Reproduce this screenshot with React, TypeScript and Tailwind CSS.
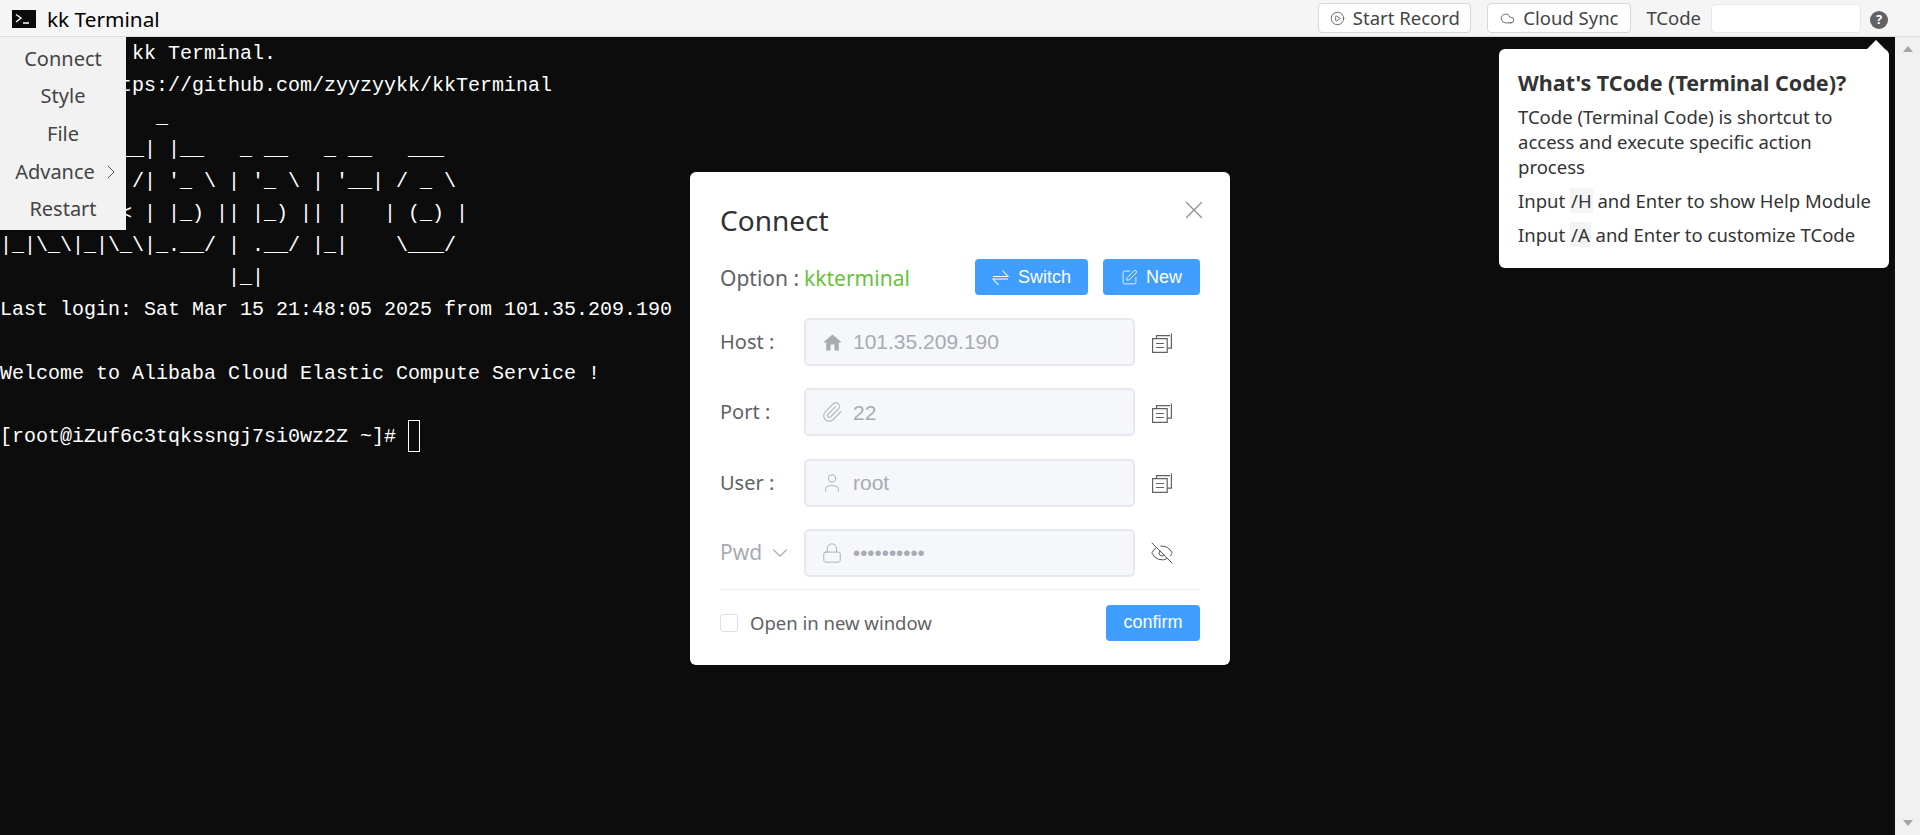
import React from 'react';
import { ChevronDown, ChevronRight, CirclePlay, Cloud, EyeOff, Lock, Paperclip, SquarePen, User, X } from 'lucide-react';

const TERMINAL_LINES = [
  'Welcome to kk Terminal.',
  'Github: https://github.com/zyyzyykk/kkTerminal',
  '             _',
  "| | _| | ___| |__   _ __   _ __   ___",
  "| |/ /| |/ /| '_ \\ | '_ \\ | '__| / _ \\",
  '|   < |   < | |_) || |_) || |   | (_) |',
  '|_|\\_\\|_|\\_\\|_.__/ | .__/ |_|    \\___/',
  '                   |_|',
  'Last login: Sat Mar 15 21:48:05 2025 from 101.35.209.190',
  '',
  'Welcome to Alibaba Cloud Elastic Compute Service !',
  '',
];

const MENU_ITEMS = ['Connect', 'Style', 'File', 'Advance', 'Restart'];

// element-plus style icons that the packages don't have
const HomeIcon = () => (
  <svg width="19" height="19" viewBox="0 0 18 18" fill="currentColor">
    <path d="M9 1.5 1 8.2V9h2v7.5h4.2V11h3.6v5.5H15V9h2v-.8L9 1.5z" />
  </svg>
);

const CopyIcon = () => (
  <svg width="20" height="20" viewBox="0 0 20 20" fill="none" stroke="#606266" strokeWidth="1.2" className="mt-[1px]">
    <path d="M.6 5.6h14.6v13.8H.6z" />
    <path d="M4.5 5.6V2.6h13.5M19.4.6v14.6h-4.2" />
    <path d="M4 10.5h8M4 14.5h8" />
  </svg>
);

const SwitchIcon = () => (
  <svg width="17" height="17" viewBox="0 0 17 17" fill="none" stroke="currentColor" strokeWidth="1.1">
    <path d="M1 7.5h15L10.5 1.5M16 10H1l5.5 6" />
  </svg>
);

const FormRow = ({ label, icon, value, dots, after }: any) => (
  <div className="flex items-center h-12">
    <div className="w-[84px] shrink-0 text-[20px] text-[#606266]">{label}</div>
    <div className="w-[331px] h-12 flex items-center border-2 border-[#e6e8ee] rounded-[5px] bg-[#f5f7fa] pl-[15px] text-[#a8abb2]">
      <span className="w-[22px] flex justify-center">{icon}</span>
      <span className={dots ? "ml-[10px] text-[20.5px] font-['Liberation_Sans',sans-serif]" : "ml-[10px] text-[21px] font-['Liberation_Sans',sans-serif]"}>{value}</span>
    </div>
    <div className="ml-[17px]">{after}</div>
  </div>
);

const HeaderButton = ({ icon, label, width }: any) => (
  <button className={`${width} h-[30px] flex items-center justify-center gap-[8px] bg-white border border-[#d5d7dc] rounded-[4px] text-[18.5px] text-[#444]`}>
    {icon}
    {label}
  </button>
);

export default function App() {
  return (
    <div className="relative h-[835px] w-[1920px] overflow-hidden flex flex-col bg-[#0c0c0c] font-['Noto_Sans',sans-serif]">
      {/* Top bar */}
      <div className="h-[37px] shrink-0 flex items-center bg-[#f5f5f5] border-b border-[#dcdcdc]">
        <div className="flex items-center pt-[3px]">
          <div className="ml-[12px] w-[24px] h-[18px] bg-[#0c0c0c] flex items-center justify-center">
            <svg width="18" height="12" viewBox="0 0 18 12" fill="none" stroke="#fff" strokeWidth="1.4">
              <path d="M1 1.5 6 5 1 9M8 10h6" />
            </svg>
          </div>
          <span className="ml-[11px] text-[20.8px] text-black leading-none">kk Terminal</span>
        </div>

        <div className="ml-auto flex items-center">
          <HeaderButton width="w-[153px]" icon={<CirclePlay size={15} strokeWidth={1.2} />} label="Start Record" />
          <div className="w-[16px]" />
          <HeaderButton width="w-[144px]" icon={<Cloud size={15} strokeWidth={1.2} />} label="Cloud Sync" />
          <span className="ml-[15px] text-[18.5px] text-[#444]">TCode</span>
          <div className="ml-[10px] w-[150px] h-[29px] bg-white border border-[#e6e8ee] rounded-[4px]" />
          <div className="ml-[9px] mr-[32px] w-[18px] h-[18px] mt-[4px] rounded-full bg-[#606266] text-white text-[13px] font-bold flex items-center justify-center">?</div>
        </div>
      </div>

      {/* Terminal + scrollbar */}
      <div className="flex-1 flex min-h-0">
        <pre className="flex-1 -mt-[1px] text-white text-[20px] leading-[32px] font-['Liberation_Mono',monospace]">
          {TERMINAL_LINES.map((line, i) => (
            <div key={i} className="h-[32px] pt-[2px]">{line}</div>
          ))}
          <div className="h-[32px] flex">
            <span className="pt-[1px]">[root@iZuf6c3tqkssngj7si0wz2Z ~]#&nbsp;</span>
            <span className="w-[12px] h-[32px] border border-white" />
          </div>
        </pre>
        <div className="w-[25px] shrink-0 bg-[#f1f1f1] flex flex-col items-center justify-between py-[9px]">
          <div className="w-0 h-0 border-x-[5px] border-x-transparent border-b-[6px] border-b-[#a3a3a3]" />
          <div className="w-0 h-0 border-x-[5px] border-x-transparent border-t-[6px] border-t-[#a3a3a3]" />
        </div>
      </div>

      {/* Left menu */}
      <div className="absolute left-0 top-[37px] w-[126px] h-[193px] pt-[3px] bg-[#f2f2f2] flex flex-col text-[20px] text-[#444]">
        {MENU_ITEMS.map((item) => (
          <div key={item} className="relative h-[37.6px] flex items-center justify-center">
            {item === 'Advance' ? <span className="mr-[16px]">{item}</span> : item}
            {item === 'Advance' && <ChevronRight size={24} strokeWidth={1} className="absolute right-[3px] text-[#555]" />}
          </div>
        ))}
      </div>

      {/* TCode popover */}
      <div className="absolute left-[1499px] top-[49px] w-[390px] h-[219px] bg-white rounded-[6px] pl-[19px] pt-[19px] text-[18.5px] text-[#333] leading-[25px]">
        <div className="absolute right-[6px] -top-[6px] w-[14px] h-[14px] rotate-45 bg-white" />
        <div className="text-[21.5px] font-bold leading-[30px] mb-[6px]">What's TCode (Terminal Code)?</div>
        <div className="w-[340px]">TCode (Terminal Code) is shortcut to access and execute specific action process</div>
        <div className="mt-[9px]">Input <span className="bg-[#f3f4f4] px-[1px]">/H</span> and Enter to show Help Module</div>
        <div className="mt-[9px]">Input <span className="bg-[#f3f4f4] px-[1px]">/A</span> and Enter to customize TCode</div>
      </div>

      {/* Connect dialog */}
      <div className="absolute left-[690px] top-[172px] w-[540px] h-[493px] bg-white rounded-[6px] px-[30px] pt-[28px]">
        <X size={30} strokeWidth={1} className="absolute right-[21px] top-[23px] text-[#8a8d94]" />
        <div className="text-[28px] leading-[40px] text-[#303133]">Connect</div>

        <div className="mt-[19px] flex items-center h-9">
          <span className="pt-[3px] text-[21px] text-[#606266]">Option :</span>
          <span className="pt-[3px] ml-[5px] text-[21px] text-[#67c23a]">kkterminal</span>
          <button className="ml-auto w-[113px] h-9 flex items-center justify-center gap-[9px] rounded-[4px] bg-[#409eff] text-white text-[18px] font-['Liberation_Sans',sans-serif]">
            <SwitchIcon />Switch
          </button>
          <button className="ml-[15px] w-[97px] h-9 flex items-center justify-center gap-[8px] rounded-[4px] bg-[#409eff] text-white text-[18px] font-['Liberation_Sans',sans-serif]">
            <SquarePen size={17} strokeWidth={1.2} />New
          </button>
        </div>

        <div className="mt-[23px] flex flex-col gap-[22.33px]">
          <FormRow label="Host :" icon={<HomeIcon />} value="101.35.209.190" after={<CopyIcon />} />
          <FormRow label="Port :" icon={<Paperclip size={22} strokeWidth={1.1} />} value="22" after={<CopyIcon />} />
          <FormRow label="User :" icon={<User size={24} strokeWidth={1} />} value="root" after={<CopyIcon />} />
          <FormRow
            label={<span className="flex items-center text-[21px] text-[#a8abb2]">Pwd<ChevronDown size={26} strokeWidth={1} className="ml-[5px]" /></span>}
            icon={<Lock size={22} strokeWidth={1} />}
            value="••••••••••"
            dots
            after={<EyeOff size={24} strokeWidth={1} className="text-[#555] -ml-[2px]" />}
          />
        </div>

        <div className="mt-[12px] border-t border-[#ebeef5] pt-[15px] flex items-center">
          <span className="w-[18px] h-[18px] border border-[#dcdfe6] rounded-[3px]" />
          <span className="ml-[12px] text-[18.5px] text-[#606266]">Open in new window</span>
          <button className="ml-auto w-[94px] h-9 rounded-[4px] bg-[#409eff] text-white text-[18px] font-['Liberation_Sans',sans-serif]">confirm</button>
        </div>
      </div>
    </div>
  );
}
